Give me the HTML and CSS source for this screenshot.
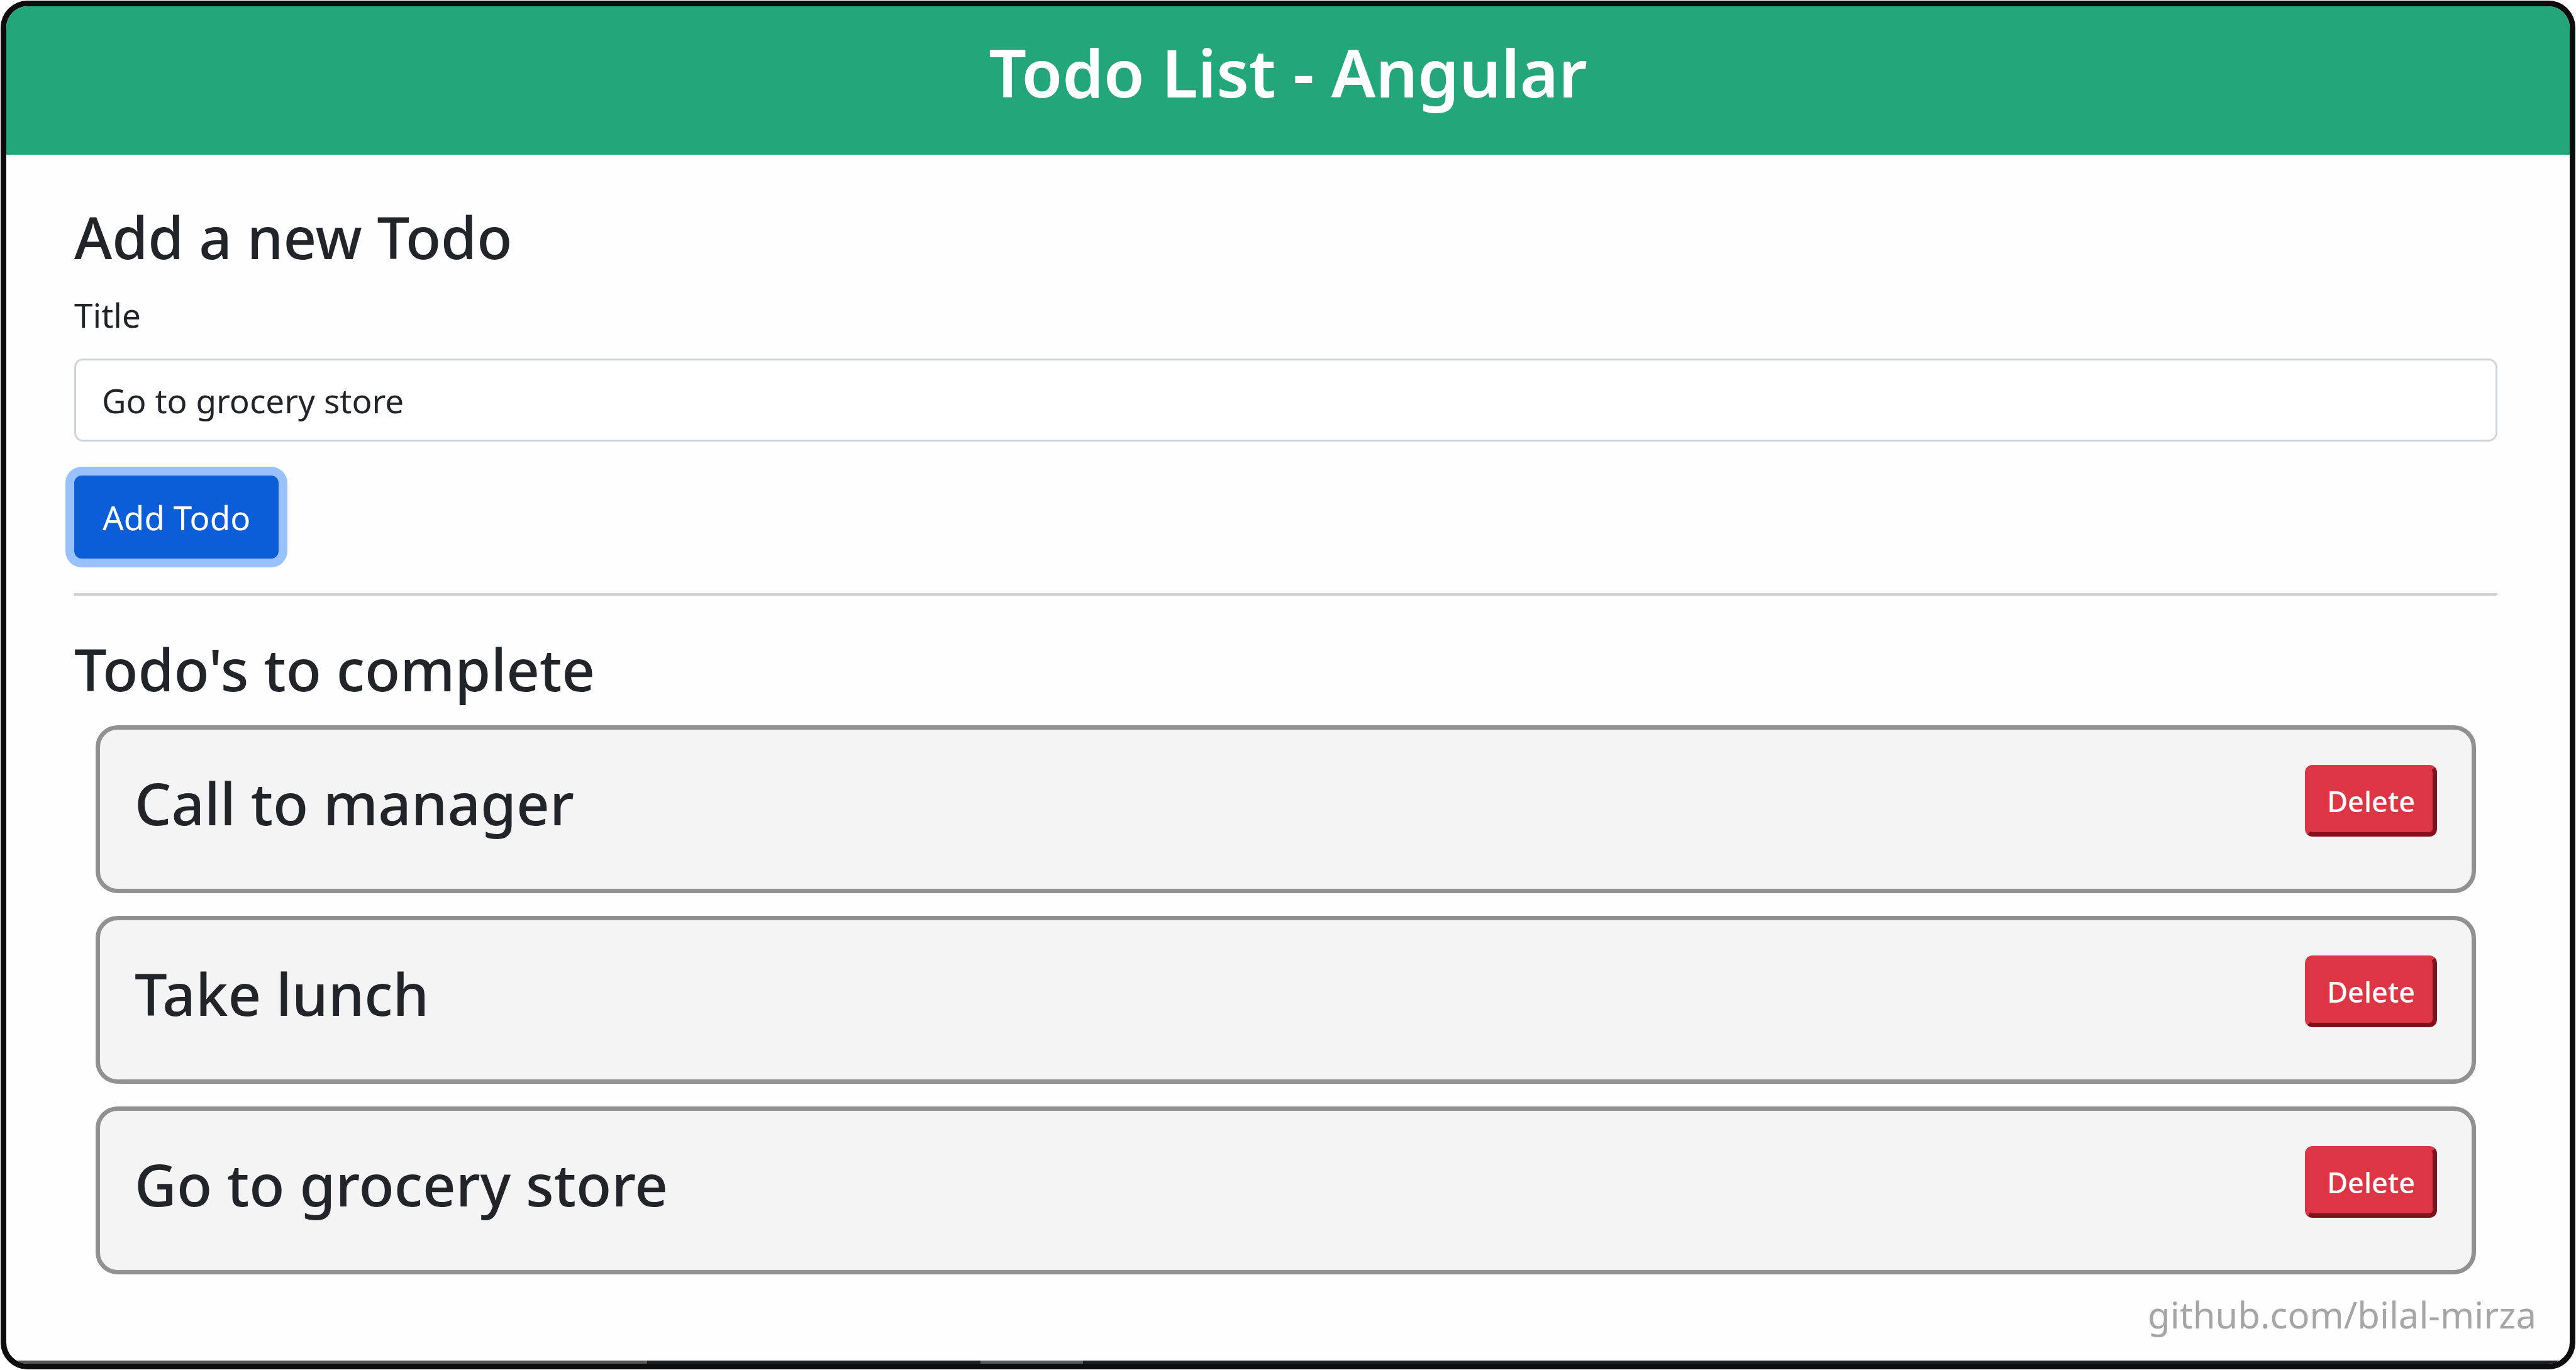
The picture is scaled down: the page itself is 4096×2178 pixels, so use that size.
FILE: index.html
```html
<!DOCTYPE html>
<html lang="en">
<head>
<meta charset="utf-8">
<title>Todo List - Angular</title>
<link rel="stylesheet" href="styles.css">
</head>
<body>
<div class="window">
  <header class="header"><h1 class="header-title">Todo List - Angular</h1></header>
  <main class="content">
    <form class="todo-form">
      <h2 class="section-title">Add a new Todo</h2>
      <label class="field-label" for="title">Title</label>
      <input class="field-input" id="title" type="text" value="Go to grocery store">
      <button class="add-button" type="button">Add Todo</button>
    </form>
    <hr class="divider">
    <section>
      <h2 class="section-title">Todo's to complete</h2>
      <ul class="todo-list">
        <li class="todo"><h3 class="todo-title">Call to manager</h3><button class="delete-button" type="button">Delete</button></li>
        <li class="todo"><h3 class="todo-title">Take lunch</h3><button class="delete-button" type="button">Delete</button></li>
        <li class="todo"><h3 class="todo-title">Go to grocery store</h3><button class="delete-button" type="button">Delete</button></li>
      </ul>
    </section>
  </main>
  <footer class="footer">github.com/bilal-mirza</footer>
  <div class="taskbar"></div>
</div>
</body>
</html>
```
FILE: styles.css
```css
* { box-sizing: border-box; }
body {
  margin: 0;
  padding: 1px;
  min-height: 100vh;
  display: flex;
  background: #fff;
  color: #212529;
  font-family: "Noto Sans", "Open Sans", sans-serif;
  font-size: 53px;
}
h1, h2, h3, ul { margin: 0; padding: 0; font-weight: 500; }
button, input { font: inherit; }

.window {
  flex: 1;
  display: flex;
  flex-direction: column;
  overflow: hidden;
  border: 9px solid #0d0d0d;
  border-radius: 43px;
  background: #fefefe;
}
.header {
  padding: 39px 0 65px;
  background: #23a67a;
  color: #fff;
  text-align: center;
}
.header-title { font-size: 105px; line-height: 132px; font-weight: 600; }

.content { flex: 1; padding: 76px 115px 0 108px; }
.todo-form { display: flex; flex-direction: column; align-items: flex-start; }
.section-title { font-size: 92px; line-height: 110px; }
.field-label { margin: 29px 0; line-height: 80px; }
.field-input {
  width: 100%;
  height: 132px;
  padding: 0 41px;
  border: 3px solid #ced4da;
  border-radius: 14px;
  background: #fff;
  color: #212529;
}
.add-button {
  height: 132px;
  margin: 54px 0 55px;
  padding: 0 45px;
  border: 0;
  border-radius: 12px;
  background: #0b5ed7;
  box-shadow: 0 0 0 14px #98c1fe;
  color: #fff;
}
.divider { margin: 0 0 62px; border: 0; height: 4px; background: #cfcfcf; }

.todo-list {
  display: flex;
  flex-direction: column;
  gap: 36px;
  margin: 34px 34px 0;
  list-style: none;
}
.todo {
  display: flex;
  justify-content: space-between;
  align-items: flex-start;
  padding: 56px 55px 81px;
  border: 7px solid #919191;
  border-radius: 35px;
  background: #f4f4f4;
}
.todo-title { padding-top: 6px; font-size: 92px; line-height: 110px; }
.delete-button {
  height: 114px;
  padding: 0 28px;
  border: 7px solid #dc3545;
  border-right-color: #7f121d;
  border-bottom-color: #7f121d;
  border-radius: 12px;
  background: #dc3545;
  color: #fff;
  font-size: 45px;
}

.footer {
  padding: 0 53px 33px;
  color: #a6a6a6;
  font-size: 58px;
  line-height: 80px;
  text-align: right;
}
/* sliver of the desktop taskbar along the bottom edge */
.taskbar {
  height: 5px;
  background: linear-gradient(to right, #555 0 25%, #1b1e25 25% 38%, #55585c 38% 42%, #1b1e25 42%);
}
```
